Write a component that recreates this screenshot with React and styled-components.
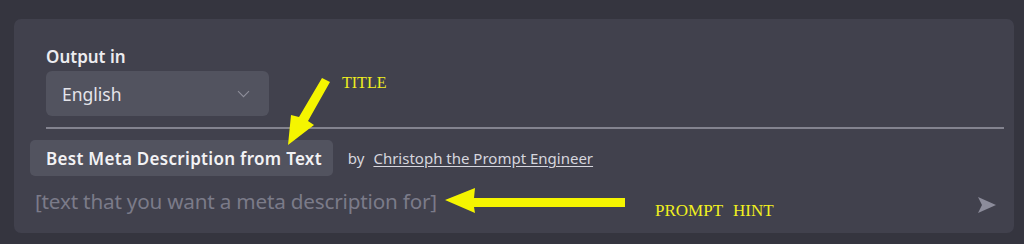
import styled, { createGlobalStyle } from 'styled-components';

const GlobalStyle = createGlobalStyle`
  html, body {
    margin: 0;
    padding: 0;
    background: #35353f;
  }
  body {
    font-family: 'Noto Sans', 'Open Sans', sans-serif;
  }
`;

const Page = styled.div`
  position: relative;
  width: 1024px;
  height: 244px;
  padding: 19px 10px 0 14px;
  box-sizing: border-box;
`;

const Card = styled.div`
  width: 1000px;
  height: 214px;
  box-sizing: border-box;
  background: #41414d;
  border-radius: 7px;
  padding: 28px 10px 0 16px;
  display: flex;
  flex-direction: column;
`;

const Settings = styled.div`
  margin-left: 16px;
  border-bottom: 2px solid #83838f;
  padding-bottom: 11px;
  display: flex;
  flex-direction: column;
  gap: 4px;
`;

const Label = styled.label`
  font-size: 17px;
  font-weight: 600;
  color: #ececf0;
  line-height: 20px;
`;

const Select = styled.div`
  width: 223px;
  height: 45px;
  box-sizing: border-box;
  background: #52535f;
  border-radius: 6px;
  display: flex;
  align-items: center;
  justify-content: space-between;
  padding: 0 19px 0 16px;
  font-size: 17.5px;
  color: #e4e4ea;
`;

const MetaRow = styled.div`
  display: flex;
  align-items: center;
  margin-top: 11px;
  gap: 15px;
`;

const TitleChip = styled.div`
  height: 36px;
  box-sizing: border-box;
  background: #52535f;
  border-radius: 5px;
  padding: 0 11px 0 16px;
  display: flex;
  align-items: center;
  font-size: 17px;
  font-weight: 600;
  color: #f2f2f5;
  letter-spacing: 0.3px;
`;

const Byline = styled.div`
  font-size: 15px;
  color: #d6d6de;
  display: flex;
  gap: 9px;
`;

const AuthorLink = styled.a`
  color: #d6d6de;
  text-decoration: underline;
  text-underline-offset: 2px;
`;

const PromptRow = styled.div`
  display: flex;
  align-items: center;
  justify-content: space-between;
  margin-top: 10px;
  padding: 0 7px 0 5px;
`;

const Hint = styled.div`
  font-size: 20.7px;
  line-height: 28px;
  color: #7b7b89;
  letter-spacing: -0.2px;
`;

const SendButton = styled.button`
  background: none;
  border: none;
  padding: 0;
  width: 20px;
  height: 20px;
  margin-top: 9px;
  display: flex;
  align-items: center;
  justify-content: center;
`;

const Overlay = styled.svg`
  position: absolute;
  left: 0;
  top: 0;
  pointer-events: none;
`;

const AnnotationText = styled.text`
  font-family: 'Liberation Serif', 'DejaVu Serif', serif;
  fill: #f0f01e;
`;

export default function App() {
  return (
    <>
      <GlobalStyle />
      <Page>
        <Card>
          <Settings>
            <Label>Output in</Label>
            <Select>
              English
              <svg width="13" height="8" viewBox="0 0 13 8">
                <path d="M1 1.2 L6.5 6.7 L12 1.2" fill="none" stroke="#8e8e9a" strokeWidth="1.1" />
              </svg>
            </Select>
          </Settings>
          <MetaRow>
            <TitleChip>Best Meta Description from Text</TitleChip>
            <Byline>
              by <AuthorLink href="#">Christoph the Prompt Engineer</AuthorLink>
            </Byline>
          </MetaRow>
          <PromptRow>
            <Hint>[text that you want a meta description for]</Hint>
            <SendButton>
              <svg width="18" height="16" viewBox="0 0 18 16">
                <path d="M0 0 L18 8 L0 16 L4 8 Z" fill="#8c8c9b" />
              </svg>
            </SendButton>
          </PromptRow>
        </Card>
        <Overlay width="1024" height="244" viewBox="0 0 1024 244">
          <polygon
            points="322,78 330,82 308,121 314,125 288,145 291,115 299,117"
            fill="#f5f500"
          />
          <polygon
            points="445,200 475,188 474,198 625,198 625,207 474,207 475,213"
            fill="#f5f500"
          />
          <AnnotationText x="342" y="88" fontSize="16">TITLE</AnnotationText>
          <AnnotationText x="655" y="216" fontSize="17" wordSpacing="6">
            PROMPT HINT
          </AnnotationText>
        </Overlay>
      </Page>
    </>
  );
}
